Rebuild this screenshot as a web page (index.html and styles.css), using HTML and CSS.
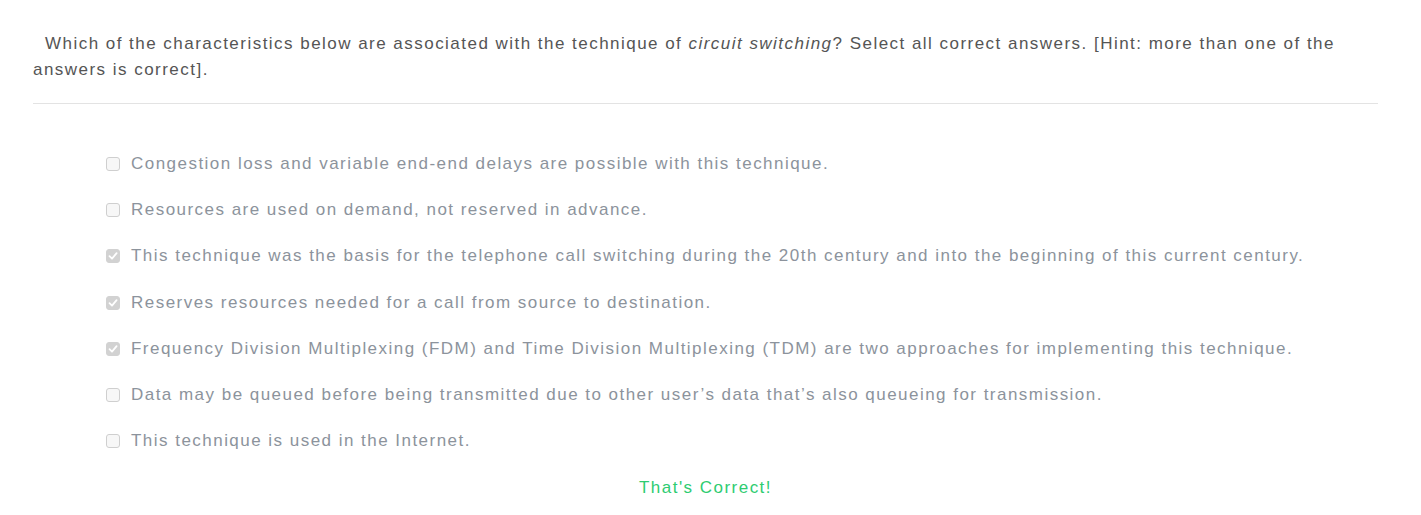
FILE: index.html
```html
<!DOCTYPE html>
<html>
<head>
<meta charset="utf-8">
<link rel="stylesheet" href="styles.css">
</head>
<body>
<div class="quiz">
  <p class="question"><span class="indent"></span>Which of the characteristics below are associated with the technique of <em>circuit switching</em>? Select all correct answers. [Hint: more than one of the answers is correct].</p>
  <hr class="rule">
  <ul class="options">
    <li class="option"><span class="box"></span><span class="label">Congestion loss and variable end-end delays are possible with this technique.</span></li>
    <li class="option"><span class="box"></span><span class="label">Resources are used on demand, not reserved in advance.</span></li>
    <li class="option"><span class="box checked"><svg viewBox="0 0 14 14" width="14" height="14"><path d="M3.5 7.2 L6 9.6 L10.6 4.2" fill="none" stroke="#fff" stroke-width="1.8" stroke-linecap="round" stroke-linejoin="round"/></svg></span><span class="label">This technique was the basis for the telephone call switching during the 20th century and into the beginning of this current century.</span></li>
    <li class="option"><span class="box checked"><svg viewBox="0 0 14 14" width="14" height="14"><path d="M3.5 7.2 L6 9.6 L10.6 4.2" fill="none" stroke="#fff" stroke-width="1.8" stroke-linecap="round" stroke-linejoin="round"/></svg></span><span class="label">Reserves resources needed for a call from source to destination.</span></li>
    <li class="option"><span class="box checked"><svg viewBox="0 0 14 14" width="14" height="14"><path d="M3.5 7.2 L6 9.6 L10.6 4.2" fill="none" stroke="#fff" stroke-width="1.8" stroke-linecap="round" stroke-linejoin="round"/></svg></span><span class="label">Frequency Division Multiplexing (FDM) and Time Division Multiplexing (TDM) are two approaches for implementing this technique.</span></li>
    <li class="option"><span class="box"></span><span class="label">Data may be queued before being transmitted due to other user’s data that’s also queueing for transmission.</span></li>
    <li class="option"><span class="box"></span><span class="label">This technique is used in the Internet.</span></li>
  </ul>
  <p class="result">That's Correct!</p>
</div>
</body>
</html>
```
FILE: styles.css
```css
html, body {
  margin: 0;
  padding: 0;
  background: #fff;
}
body {
  font-family: "Liberation Sans", Arial, sans-serif;
  font-size: 17px;
  letter-spacing: 1.47px;
}
.quiz {
  padding: 31px 43px 0 33px;
}
.question {
  margin: 0;
  line-height: 26px;
  color: #555;
}
.indent {
  display: inline-block;
  width: 12px;
}
.rule {
  margin: 20px 0 0 0;
  border: 0;
  border-top: 1px solid #e3e3e3;
  height: 0;
}
.options {
  list-style: none;
  margin: 47px 0 0 0;
  padding: 0 0 0 73px;
  display: flex;
  flex-direction: column;
  gap: 20.2px;
}
.option {
  display: flex;
  align-items: center;
  gap: 11px;
  line-height: 26px;
  color: #8c939c;
}
.box {
  width: 14px;
  height: 14px;
  box-sizing: border-box;
  border: 1px solid #cfcfcf;
  border-radius: 3px;
  background: #f7f7f7;
  display: flex;
  flex-shrink: 0;
}
.box.checked {
  background: #d2d2d2;
  border-color: #d2d2d2;
}
.box svg {
  margin: -1px;
}
.result {
  margin: 21px 0 0 0;
  line-height: 26px;
  text-align: center;
  color: #2ecc71;
}
```
